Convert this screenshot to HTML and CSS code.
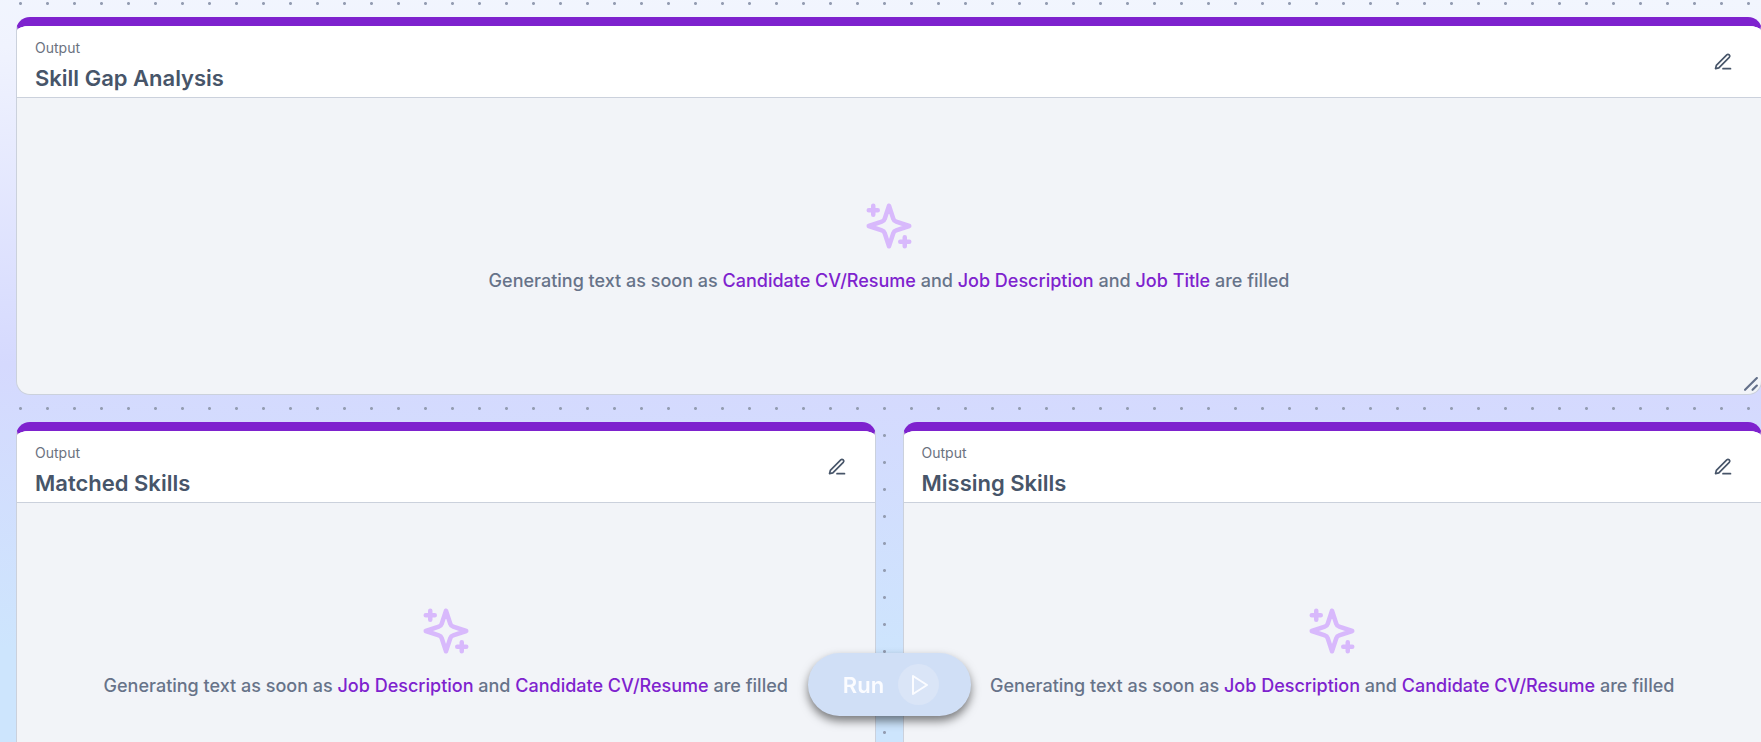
FILE: index.html
```html
<!DOCTYPE html>
<html lang="en">
<head>
<meta charset="utf-8">
<title>Skill Gap Analysis</title>
<link rel="stylesheet" href="styles.css">
</head>
<body>
<svg class="defs" aria-hidden="true">
  <symbol id="pen" viewBox="0 0 24 24"><path d="M12 20h9M16.5 3.5a2.12 2.12 0 0 1 3 3L7 19l-4 1 1-4z"/></symbol>
  <symbol id="sparkles" viewBox="0 0 24 24"><path d="M12 3 10.1 8.8a2 2 0 0 1-1.3 1.3L3 12l5.8 1.9a2 2 0 0 1 1.3 1.3L12 21l1.9-5.8a2 2 0 0 1 1.3-1.3L21 12l-5.800-1.900a2 2 0 0 1-1.300-1.300ZM5 3v4M3 5h4M19 17v4M17 19h4"/></symbol>
</svg>
<main class="board">
  <section class="card card-wide">
    <header class="card-head">
      <div><p class="kind">Output</p><h2 class="title">Skill Gap Analysis</h2></div>
      <button class="edit" aria-label="Edit"><svg><use href="#pen"/></svg></button>
    </header>
    <div class="card-body">
      <svg class="sparkles"><use href="#sparkles"/></svg>
      <p class="hint">Generating text as soon as <b>Candidate CV/Resume</b> and <b>Job Description</b> and <b>Job Title</b> are filled</p>
    </div>
    <svg class="resize" viewBox="0 0 14 14"><path d="M1 12 12 1M8 12l4-4"/></svg>
  </section>
  <section class="card">
    <header class="card-head">
      <div><p class="kind">Output</p><h2 class="title">Matched Skills</h2></div>
      <button class="edit" aria-label="Edit"><svg><use href="#pen"/></svg></button>
    </header>
    <div class="card-body">
      <svg class="sparkles"><use href="#sparkles"/></svg>
      <p class="hint">Generating text as soon as <b>Job Description</b> and <b>Candidate CV/Resume</b> are filled</p>
    </div>
  </section>
  <section class="card">
    <header class="card-head">
      <div><p class="kind">Output</p><h2 class="title">Missing Skills</h2></div>
      <button class="edit" aria-label="Edit"><svg><use href="#pen"/></svg></button>
    </header>
    <div class="card-body">
      <svg class="sparkles"><use href="#sparkles"/></svg>
      <p class="hint">Generating text as soon as <b>Job Description</b> and <b>Candidate CV/Resume</b> are filled</p>
    </div>
  </section>
</main>
<div class="run-bar">
  <button class="run">Run
    <span class="run-icon"><svg viewBox="0 0 24 24"><path d="M6 3 20 12 6 21Z"/></svg></span>
  </button>
</div>
</body>
</html>
```
FILE: styles.css
```css
* { box-sizing: border-box; }
body {
  margin: 0;
  height: 100vh;
  overflow: hidden;
  font-family: Inter, "Liberation Sans", sans-serif;
  background:
    radial-gradient(circle, #949db2 1px, transparent 2px) 7px -10px / 27px 27px,
    linear-gradient(181deg, #f2f6fe 0, #f0f3fe 10%, #d5d9fe 51%, #cde5fd 88%);
}
h2, p { margin: 0; }
.defs { position: absolute; width: 0; height: 0; }
svg {
  fill: none;
  stroke: currentColor;
  stroke-width: 2;
  stroke-linecap: round;
  stroke-linejoin: round;
}
.board {
  display: grid;
  grid-template-columns: 1fr 1fr;
  align-content: start;
  gap: 27px;
  height: 100vh;
  overflow: hidden;
  padding: 17px 0 0 16px;
  margin-right: -1px;
}
.card {
  position: relative;
  display: flex;
  flex-direction: column;
  min-height: 378px;
  border: 1px solid #cbd1dc;
  border-top: 9px solid #7e22ce;
  border-radius: 14px;
  background: #f2f4f8;
  overflow: hidden;
}
.card-wide { grid-column: 1 / -1; }
.card-head {
  display: flex;
  justify-content: space-between;
  align-items: flex-start;
  padding: 12px 28px 3px 18px;
  border-bottom: 1px solid #cbd1dc;
  background: #fff;
}
.kind { font-size: 14px; line-height: 20px; color: #6b7280; }
.title {
  margin-top: 4px;
  font-size: 22px;
  line-height: 32px;
  font-weight: 600;
  color: #475569;
}
.edit {
  display: flex;
  padding: 14px 0 0;
  border: 0;
  background: none;
  color: #475569;
}
.edit svg { width: 20px; height: 20px; }
.card-body {
  flex: 1;
  display: flex;
  flex-direction: column;
  align-items: center;
  justify-content: center;
  gap: 14px;
  padding-top: 2px;
}
.sparkles { width: 54px; height: 54px; color: #d8b9fc; }
.hint { font-size: 18px; line-height: 28px; font-weight: 500; color: #677389; }
.hint b { font-weight: 500; color: #7e22ce; }
.resize {
  position: absolute;
  right: 2px;
  bottom: 2px;
  width: 15px;
  height: 15px;
  color: #64708a;
}
.run-bar {
  position: fixed;
  left: 18px;
  right: 0;
  bottom: 26px;
  display: flex;
  justify-content: center;
  pointer-events: none;
}
.run {
  display: flex;
  align-items: center;
  gap: 14px;
  padding: 11px 32px 11px 35px;
  border: 0;
  border-radius: 32px;
  background: #d0dff6;
  color: #fbfcff;
  font: 600 22px/32px Inter, "Liberation Sans", sans-serif;
  box-shadow: 0 5px 10px rgba(0, 0, 0, 0.5);
  pointer-events: auto;
}
.run-icon {
  display: grid;
  place-items: center;
  width: 41px;
  height: 41px;
  border-radius: 50%;
  background: #dae5f7;
}
.run-icon svg { width: 24px; height: 24px; }
```
